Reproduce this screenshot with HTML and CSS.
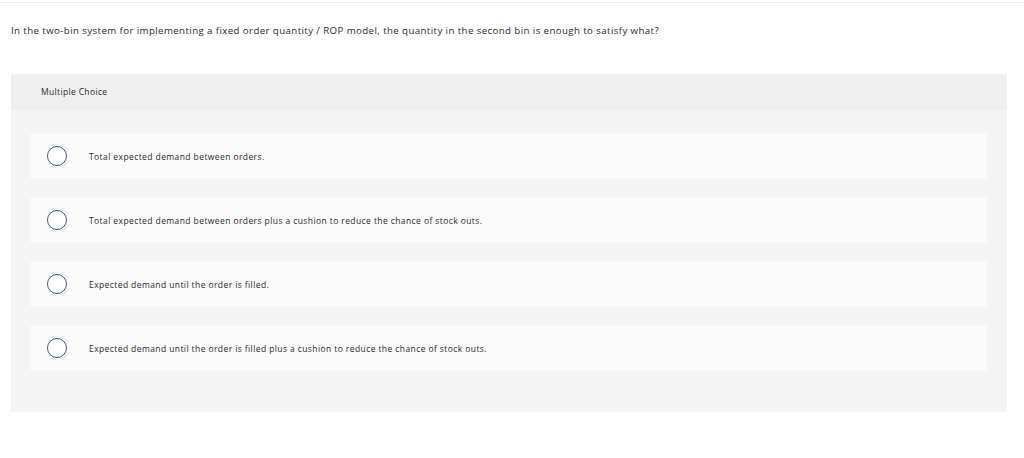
FILE: index.html
```html
<!DOCTYPE html>
<html>
<head>
<meta charset="utf-8">
<link rel="stylesheet" href="styles.css">
</head>
<body>
<div class="page">
  <div class="topline"></div>
  <p class="question">In the two-bin system for implementing a fixed order quantity / ROP model, the quantity in the second bin is enough to satisfy what?</p>
  <div class="panel">
    <div class="panel-head">Multiple Choice</div>
    <div class="options">
      <div class="option"><span class="radio"></span><span class="label">Total expected demand between orders.</span></div>
      <div class="option"><span class="radio"></span><span class="label">Total expected demand between orders plus a cushion to reduce the chance of stock outs.</span></div>
      <div class="option"><span class="radio"></span><span class="label">Expected demand until the order is filled.</span></div>
      <div class="option"><span class="radio"></span><span class="label">Expected demand until the order is filled plus a cushion to reduce the chance of stock outs.</span></div>
    </div>
  </div>
</div>
</body>
</html>
```

FILE: styles.css
```css
html, body {
  margin: 0;
  padding: 0;
  background: #fff;
}
body {
  font-family: "Open Sans", "Liberation Sans", sans-serif;
  color: #2b2b2b;
}
.page {
  padding-top: 2px;
}
.topline {
  height: 0;
  border-top: 1px solid #ececec;
}
.question {
  margin: 0;
  padding: 0 11px;
  height: 55px;
  line-height: 55px;
  font-size: 9.7px;
  letter-spacing: 0.4px;
}
.panel {
  margin: 16px 17px 0 11px;
  background: #f4f4f4;
  border-radius: 2px;
}
.panel-head {
  height: 36px;
  line-height: 36px;
  padding-left: 30px;
  background: #efefef;
  font-size: 8.5px;
  letter-spacing: 0.35px;
  border-radius: 2px 2px 0 0;
}
.options {
  display: flex;
  flex-direction: column;
  gap: 18px;
  padding: 23px 20px 41px 19px;
}
.option {
  height: 46px;
  display: flex;
  align-items: center;
  padding-left: 17px;
  background: #fafafa;
  border-radius: 3px;
}
.radio {
  width: 18px;
  height: 18px;
  border: 1px solid #2d5d99;
  border-radius: 50%;
  background: #fff;
  flex: none;
}
.label {
  margin-left: 22px;
  font-size: 8.5px;
  letter-spacing: 0.41px;
}
```
